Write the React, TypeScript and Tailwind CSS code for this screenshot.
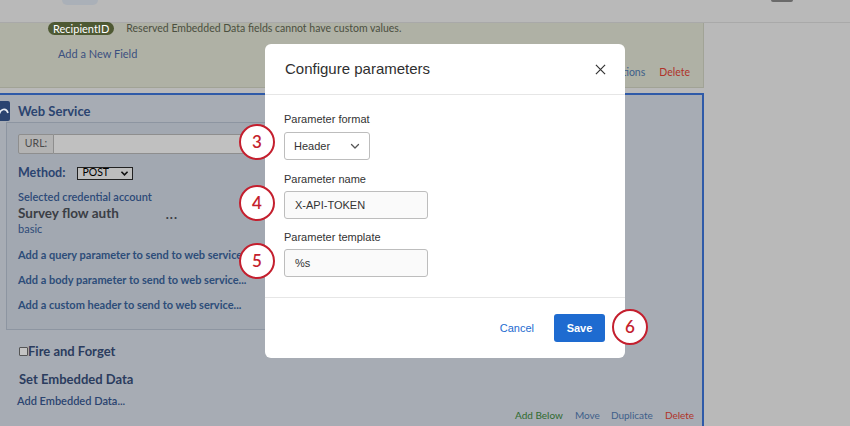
// Survey flow editor with "Configure parameters" dialog open

function Marker({ n, className }: { n: number; className: string }) {
  return (
    <div
      className={`absolute w-[36px] h-[36px] rounded-full bg-white border-[2.5px] border-[#c41f2e] flex items-center justify-center text-[17px] text-[#c41f2e] font-['Lato',sans-serif] font-semibold ${className}`}
    >
      {n}
    </div>
  );
}

function Chevron({ className }: { className: string }) {
  return (
    <svg viewBox="0 0 12 12" className={className} fill="none" stroke="currentColor" strokeWidth="1.3">
      <path d="M2.5 4.5 6 8l3.5-3.5" strokeLinecap="round" strokeLinejoin="round" />
    </svg>
  );
}

export default function App() {
  return (
    <div className="relative w-[850px] h-[426px] overflow-hidden bg-[#b9b9b9] font-['Lato',sans-serif]">
      {/* top bar */}
      <div className="h-[23px] border-b border-[#a9a9a9] flex items-start">
        <div className="ml-[62px] w-[36px] h-[5px] rounded-b-md bg-[#aab0b8]" />
        <div className="ml-auto mr-[57px] w-[22px] h-[2px] rounded-b-full bg-[#6a6a6a]" />
      </div>

      <div className="w-[704px] flex flex-col">
        {/* embedded data block */}
        <div className="h-[65px] bg-[#afb1a5] border-r border-b border-[#a1a396] relative">
          <div className="flex items-center h-[13px] -mt-[1px]">
            <span className="ml-[48px] h-[13px] px-[5px] rounded-full bg-[#4e5933] text-white text-[11px] leading-[13px]">
              RecipientID
            </span>
            <span className="ml-[12px] text-[10.5px] text-[#4b4f3f]">
              Reserved Embedded Data fields cannot have custom values.
            </span>
          </div>
          <div className="ml-[58px] mt-[11px] text-[11px] text-[#3b5080]">Add a New Field</div>
          <div className="absolute right-[13px] bottom-[6px] flex gap-[14px] text-[10.5px]">
            <span className="text-[#3e5f8a]">Options</span>
            <span className="text-[#b0332a]">Delete</span>
          </div>
        </div>

        {/* web service block */}
        <div className="mt-[5px] h-[340px] border-t-2 border-r-2 border-[#2f5aa8] bg-[#a7acb4] relative">
          <div className="flex items-center h-[22px] mt-[5px]">
            <div className="w-[10px] h-[20px] bg-[#2b4470] rounded-r-[2px] overflow-hidden">
              <svg viewBox="0 0 10 20" className="w-[10px] h-[20px]" fill="none" stroke="#e8ecf2" strokeWidth="1.6">
                <path d="M-1 14 C0 8 6 6 8 12" />
              </svg>
            </div>
            <span className="ml-[8px] text-[13px] leading-[16px] font-bold text-[#2b4470]">Web Service</span>
          </div>

          <div className="ml-[6px] w-[300px] h-[208px] border border-[#8d95a1] bg-[#a2a8b1] pl-[11px] pt-[11px]">
            <div className="flex h-[20px]">
              <div className="w-[36px] border border-[#8e8e8e] bg-[#b3b3b3] rounded-l-[2px] text-[10.5px] text-[#4a4a4a] flex items-center justify-center">
                URL:
              </div>
              <div className="flex-1 border border-l-0 border-[#8e8e8e] bg-[#c0c0c0]" />
            </div>

            <div className="flex items-center mt-[12px] h-[14px]">
              <span className="text-[12.5px] font-bold text-[#2b4470]">Method:</span>
              <div className="ml-[12px] w-[56px] h-[13px] border border-[#222] bg-[#bebebe] flex items-center pl-[4px] pr-[3px] text-[10.5px] text-black">
                POST
                <svg viewBox="0 0 10 8" className="ml-auto w-[9px] h-[7px]" fill="none" stroke="#111" strokeWidth="1.8">
                  <path d="M1.5 2 5 5.5 8.5 2" />
                </svg>
              </div>
            </div>

            <div className="mt-[10px] text-[11px] font-semibold text-[#2d4a78] leading-[13px]">
              Selected credential account
            </div>
            <div className="flex items-center mt-[2px] h-[16px]">
              <span className="text-[13.5px] leading-[16px] font-bold text-[#3b3e45]">Survey flow auth</span>
              <span className="ml-[47px] mt-[3px] text-[13px] font-bold text-[#3b3e45] tracking-[1px]">...</span>
            </div>
            <div className="mt-[1px] text-[11px] text-[#2d4a78] leading-[13px]">basic</div>

            <div className="mt-[13px] flex flex-col gap-[12px] text-[11px] font-bold text-[#2d4d79] leading-[13px] whitespace-nowrap">
              <span>Add a query parameter to send to web service...</span>
              <span>Add a body parameter to send to web service...</span>
              <span>Add a custom header to send to web service...</span>
            </div>
          </div>

          <div className="flex items-center ml-[19px] mt-[13px] h-[16px]">
            <div className="w-[9px] h-[9px] border border-[#555] bg-[#c4c4c4] rounded-[1px]" />
            <span className="text-[13px] leading-[16px] font-bold text-[#2b3c5e]">Fire and Forget</span>
          </div>
          <div className="ml-[19px] mt-[12px] text-[13px] leading-[16px] font-bold text-[#2b3c5e]">Set Embedded Data</div>
          <div className="ml-[17px] mt-[7px] text-[11px] leading-[13px] font-semibold text-[#2b4470]">Add Embedded Data...</div>
          <div className="absolute left-[515px] top-[314px] flex text-[10px] leading-[13px] whitespace-nowrap">
            <span className="text-[#2e6a2e]">Add Below</span>
            <span className="ml-[12px] text-[#3e5f8a]">Move</span>
            <span className="ml-[11px] text-[#3e5f8a]">Duplicate</span>
            <span className="ml-[12px] text-[#b0332a]">Delete</span>
          </div>
        </div>
      </div>

      {/* dialog */}
      <div className="absolute left-[265px] top-[44px] w-[360px] h-[314px] bg-white rounded-[6px] flex flex-col font-['Liberation_Sans',Arial,sans-serif] text-[#333]">
        <div className="h-[51px] border-b border-[#e6e6e6] flex items-center pl-[20px] pr-[19px]">
          <span className="text-[15px] text-[#2f2f2f]">Configure parameters</span>
          <svg viewBox="0 0 12 12" className="ml-auto w-[11px] h-[11px]" stroke="#333" strokeWidth="1.3">
            <path d="M1 1l10 10M11 1 1 11" />
          </svg>
        </div>
        <div className="flex-1 pl-[19px] pt-[18px]">
          <div className="text-[11px] leading-[13px]">Parameter format</div>
          <div className="mt-[6px] w-[86px] h-[28px] border border-[#bdbdbd] rounded-[3px] flex items-center pl-[9px] pr-[8px] text-[11px]">
            Header
            <Chevron className="ml-auto w-[12px] h-[12px] text-[#555]" />
          </div>
          <div className="mt-[13px] text-[11px] leading-[13px]">Parameter name</div>
          <div className="mt-[5px] w-[144px] h-[28px] border border-[#bdbdbd] rounded-[3px] bg-[#fafafa] flex items-center pl-[10px] text-[11px]">
            X-API-TOKEN
          </div>
          <div className="mt-[12px] text-[11px] leading-[13px]">Parameter template</div>
          <div className="mt-[5px] w-[144px] h-[28px] border border-[#bdbdbd] rounded-[3px] bg-[#fafafa] flex items-center pl-[10px] text-[11px]">
            %s
          </div>
        </div>
        <div className="h-[61px] border-t border-[#e6e6e6] flex items-center justify-end pr-[20px]">
          <span className="text-[11px] text-[#1e6bd0]">Cancel</span>
          <button className="ml-[20px] w-[51px] h-[28px] rounded-[3px] bg-[#1e6bd0] text-white text-[11px] font-bold">
            Save
          </button>
        </div>
      </div>

      <Marker n={3} className="left-[239px] top-[124px]" />
      <Marker n={4} className="left-[239px] top-[185px]" />
      <Marker n={5} className="left-[239px] top-[243px]" />
      <Marker n={6} className="left-[612px] top-[309px]" />
    </div>
  );
}
